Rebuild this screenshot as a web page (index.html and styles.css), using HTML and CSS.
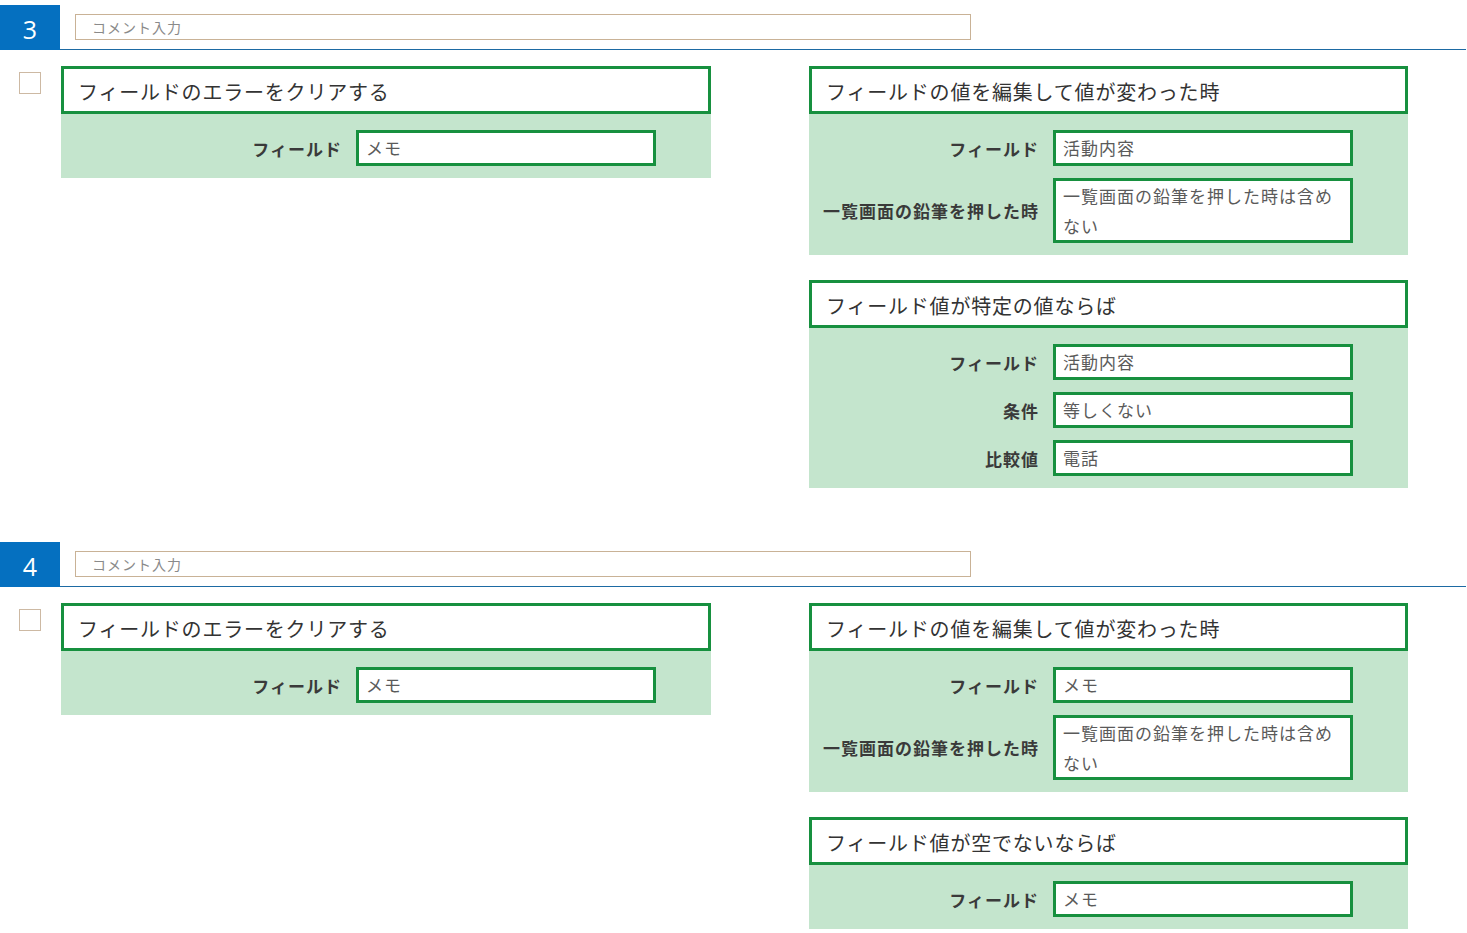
FILE: index.html
```html
<!DOCTYPE html>
<html lang="ja">
<head>
<meta charset="utf-8">
<title>ルール</title>
<link rel="stylesheet" href="styles.css">
</head>
<body>
<div class="page">
  <section class="section">
    <div class="section-head">
      <div class="num">3</div>
      <div class="comment">コメント入力</div>
    </div>
    <div class="section-body">
      <div class="check-col"><span class="checkbox"></span></div>
      <div class="left-col">
        <div class="card">
          <div class="card-title">フィールドのエラーをクリアする</div>
          <div class="card-body">
            <div class="row"><span class="label">フィールド</span><span class="field">メモ</span></div>
          </div>
        </div>
      </div>
      <div class="right-col">
        <div class="card">
          <div class="card-title">フィールドの値を編集して値が変わった時</div>
          <div class="card-body">
            <div class="row"><span class="label">フィールド</span><span class="field">活動内容</span></div>
            <div class="row"><span class="label">一覧画面の鉛筆を押した時</span><span class="field field-multi">一覧画面の鉛筆を押した時は含め<br>ない</span></div>
          </div>
        </div>
        <div class="card">
          <div class="card-title">フィールド値が特定の値ならば</div>
          <div class="card-body">
            <div class="row"><span class="label">フィールド</span><span class="field">活動内容</span></div>
            <div class="row"><span class="label">条件</span><span class="field">等しくない</span></div>
            <div class="row"><span class="label">比較値</span><span class="field">電話</span></div>
          </div>
        </div>
      </div>
    </div>
  </section>

  <section class="section">
    <div class="section-head">
      <div class="num">4</div>
      <div class="comment">コメント入力</div>
    </div>
    <div class="section-body">
      <div class="check-col"><span class="checkbox"></span></div>
      <div class="left-col">
        <div class="card">
          <div class="card-title">フィールドのエラーをクリアする</div>
          <div class="card-body">
            <div class="row"><span class="label">フィールド</span><span class="field">メモ</span></div>
          </div>
        </div>
      </div>
      <div class="right-col">
        <div class="card">
          <div class="card-title">フィールドの値を編集して値が変わった時</div>
          <div class="card-body">
            <div class="row"><span class="label">フィールド</span><span class="field">メモ</span></div>
            <div class="row"><span class="label">一覧画面の鉛筆を押した時</span><span class="field field-multi">一覧画面の鉛筆を押した時は含め<br>ない</span></div>
          </div>
        </div>
        <div class="card">
          <div class="card-title">フィールド値が空でないならば</div>
          <div class="card-body">
            <div class="row"><span class="label">フィールド</span><span class="field">メモ</span></div>
          </div>
        </div>
      </div>
    </div>
  </section>
</div>
</body>
</html>
```

FILE: styles.css
```css
html, body {
  margin: 0;
  padding: 0;
  background: #ffffff;
}

body {
  font-family: "Noto Sans CJK JP", "Noto Sans", sans-serif;
  color: #333333;
  overflow: hidden;
}

.page {
  padding-top: 5px;
  width: 1466px;
}

.section {
  margin-bottom: 54px;
}

.section-head {
  display: flex;
  align-items: flex-start;
  height: 44px;
  border-bottom: 1px solid #1d6aa3;
}

.num {
  width: 60px;
  height: 45px;
  background: #0570c0;
  color: #ffffff;
  font-family: "Open Sans", "Noto Sans", sans-serif;
  font-size: 25px;
  line-height: 48px;
  text-align: center;
  flex: none;
}

.comment {
  margin: 9px 0 0 15px;
  width: 896px;
  height: 26px;
  box-sizing: border-box;
  border: 1px solid #c9b296;
  padding-left: 16px;
  font-size: 14px;
  letter-spacing: 1px;
  line-height: 24px;
  color: #8a8a8a;
}

.section-body {
  display: flex;
  align-items: flex-start;
  padding-top: 16px;
}

.check-col {
  width: 61px;
  flex: none;
  padding-top: 6px;
}

.checkbox {
  display: block;
  margin-left: 19px;
  width: 22px;
  height: 22px;
  box-sizing: border-box;
  border: 1px solid #cdb9a3;
  background: #fff;
}

.left-col {
  width: 650px;
  flex: none;
}

.right-col {
  margin-left: 98px;
  width: 599px;
  flex: none;
  display: flex;
  flex-direction: column;
  gap: 25px;
}

.card-title {
  height: 48px;
  box-sizing: border-box;
  border: 3px solid #17903f;
  background: #ffffff;
  padding-left: 14px;
  font-size: 20px;
  letter-spacing: 0.8px;
  line-height: 45px;
  color: #333333;
}

.card-body {
  background: #c4e5cd;
  padding: 16px 55px 0 12px;
  display: flex;
  flex-direction: column;
}

.row {
  display: flex;
  justify-content: flex-end;
  align-items: center;
  gap: 14px;
  margin-bottom: 12px;
}

.label {
  font-size: 17px;
  font-weight: bold;
  letter-spacing: 1px;
  color: #3a3a3a;
  white-space: nowrap;
}

.field {
  width: 300px;
  height: 36px;
  box-sizing: border-box;
  border: 3px solid #17903f;
  background: #ffffff;
  padding-left: 7px;
  font-size: 17px;
  letter-spacing: 1px;
  font-weight: normal;
  line-height: 30px;
  color: #5a5a5a;
  flex: none;
}

.field-multi {
  height: 65px;
  line-height: 30px;
  padding-top: 0;
}
```
